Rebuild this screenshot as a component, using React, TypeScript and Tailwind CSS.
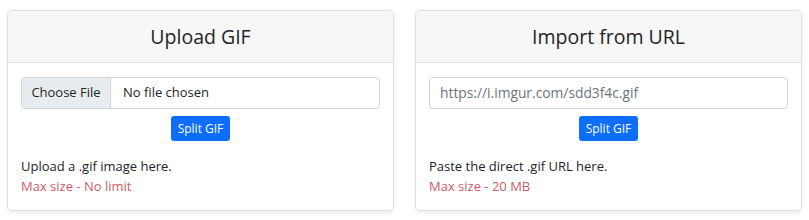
import React from "react";

function Card({ title, children }: { title: string; children: React.ReactNode }) {
  return (
    <div className="flex-1 min-w-0 rounded-[5px] border border-[#dfdfdf] bg-white shadow-[0_2px_4px_rgba(0,0,0,0.075)] overflow-hidden">
      <div className="h-[52px] bg-[#f7f7f7] border-b border-[#dfdfdf] flex items-center justify-center text-[19.5px] text-[#212529]">
        {title}
      </div>
      {children}
    </div>
  );
}

function SplitButton() {
  return (
    <div className="flex justify-center mt-[7px]">
      <button className="h-[25px] px-[7px] rounded-[3px] bg-[#0d6efd] text-white text-[12px] font-medium flex items-center">
        Split GIF
      </button>
    </div>
  );
}

export default function App() {
  return (
    <div
      className="w-[809px] h-[220px] bg-white pt-[10px] px-[7px] flex gap-[21px] items-start"
      style={{ fontFamily: '"Open Sans", "Noto Sans", sans-serif' }}
    >
      <Card title="Upload GIF">
        <div className="px-[13px] pt-[14px] pb-[14px]">
          <div className="h-[32px] flex rounded-[4px] border border-[#ced4da] overflow-hidden text-[13px] text-[#212529]">
            <div className="w-[89px] bg-[#e9ecef] border-r border-[#ced4da] flex items-center justify-center">
              Choose File
            </div>
            <div className="flex items-center pl-[12px]">No file chosen</div>
          </div>
          <SplitButton />
          <div className="mt-[15px] text-[13px] leading-[20px]">
            <div className="text-[#212529]">Upload a .gif image here.</div>
            <div className="text-[#cf5b66]">Max size - No limit</div>
          </div>
        </div>
      </Card>
      <Card title="Import from URL">
        <div className="px-[13px] pt-[14px] pb-[14px]">
          <div className="h-[32px] flex items-center rounded-[4px] border border-[#ced4da] px-[10px] text-[13.8px] text-[#6c757d]">
            https://i.imgur.com/sdd3f4c.gif
          </div>
          <SplitButton />
          <div className="mt-[15px] text-[13px] leading-[20px]">
            <div className="text-[#212529]">Paste the direct .gif URL here.</div>
            <div className="text-[#cf5b66]">Max size - 20 MB</div>
          </div>
        </div>
      </Card>
    </div>
  );
}
